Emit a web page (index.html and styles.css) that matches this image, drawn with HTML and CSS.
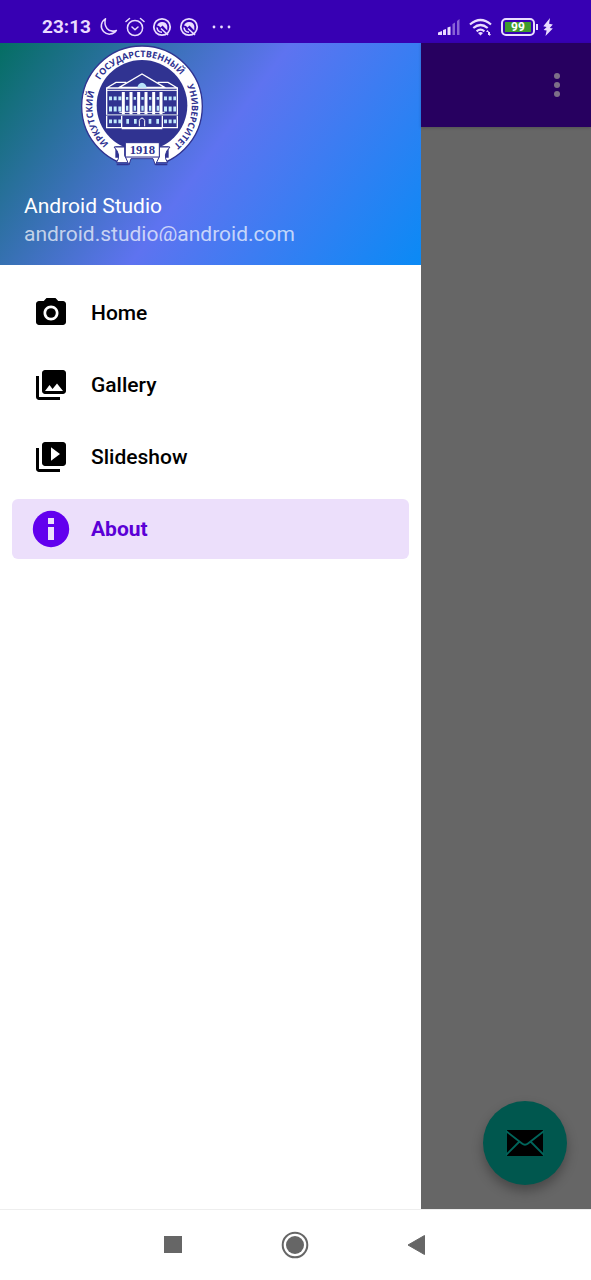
FILE: index.html
```html
<!DOCTYPE html>
<html lang="en">
<head>
<meta charset="utf-8">
<meta name="viewport" content="width=device-width, initial-scale=1">
<title>Android Studio</title>
<link rel="stylesheet" href="styles.css">
</head>
<body>
<div class="screen">
  <header class="status">
    <div class="status-group">
      <span class="clock">23:13</span>
      <svg class="icon-status" viewBox="0 0 20 20" aria-hidden="true"><path d="M7.500 1.800A8.200 8.200 0 1 0 18.400 13.400Q12 15.500 9 11.500 5.800 7 7.500 1.800Z" fill="none" stroke="currentColor" stroke-width="1.500" stroke-linejoin="round"/></svg>
      <svg class="icon-status" viewBox="0 0 20 20" aria-hidden="true"><g fill="none" stroke="currentColor" stroke-width="1.500" stroke-linecap="round" stroke-linejoin="round"><circle cx="10" cy="11" r="7.600"/><path d="M1 4.500 4.500 1.500M19 4.500 15.500 1.500M7 10l3 2.800 3-2.800"/></g></svg>
      <svg class="icon-status" viewBox="0 0 20 20" aria-hidden="true"><circle cx="10" cy="10" r="8.200" fill="none" stroke="currentColor" stroke-width="1.800"/><path d="M5 8.500A5.400 5.400 0 0 1 15.300 9V13.500L10.500 8.500 8.500 10.500 7 9Z" fill="currentColor"/><path d="M5 10.500Q5.500 15 10 15.300M9 11.500 16 18" fill="none" stroke="currentColor" stroke-width="1.600"/></svg>
      <svg class="icon-status" viewBox="0 0 20 20" aria-hidden="true"><circle cx="10" cy="10" r="8.200" fill="none" stroke="currentColor" stroke-width="1.800"/><path d="M5 8.500A5.400 5.400 0 0 1 15.300 9V13.500L10.500 8.500 8.500 10.500 7 9Z" fill="currentColor"/><path d="M5 10.500Q5.500 15 10 15.300M9 11.500 16 18" fill="none" stroke="currentColor" stroke-width="1.600"/></svg>
      <svg class="icon-more" viewBox="0 0 26 20" aria-hidden="true"><g fill="currentColor"><circle cx="8" cy="10" r="1.400"/><circle cx="15.500" cy="10" r="1.400"/><circle cx="23" cy="10" r="1.400"/></g></svg>
    </div>
    <div class="status-group status-right">
      <svg class="icon-signal" viewBox="0 0 24 18" aria-hidden="true"><g fill="currentColor"><path d="M1 14.500 5 13v4H1zM6 12l3-1v6H6zM10.500 9.500l3-1V17h-3z"/><path opacity=".45" d="M15.500 6 18 4.500V17h-2.500zM20 3l2.500-2v16H20z"/></g></svg>
      <svg class="icon-wifi" viewBox="0 0 24 18" aria-hidden="true"><g fill="none" stroke="currentColor" stroke-width="2.200"><path d="M1 6.500Q11.500-2.500 22 6.500M4.300 10Q11.500 4 18.700 10M7.600 13.300Q11.500 10 15.400 13.300"/></g><path d="M9 15Q11.500 13 14 15l-2.500 2.500zM17 14l1.500-2 1.500 2v3h-1v-3zM20 14h1v2h1l-1.300 2-1.300-2z" fill="currentColor"/></svg>
      <span class="battery"><span class="battery-level">99</span></span>
      <svg class="icon-bolt" viewBox="0 0 10 18" aria-hidden="true"><path d="M7 0 .3 8.300l3.300.7-3 3 3 .6L2.500 18l7.300-7.500-3-.6 3-3.500-3.700-.6z" fill="currentColor"/></svg>
    </div>
  </header>

  <div class="app">
    <aside class="drawer">
      <div class="drawer-header">
        <svg class="logo" viewBox="27 14 366 366" role="img" aria-label="Иркутский государственный университет">
          <defs>
            <path id="ring" d="M210 348A149 149 0 0 1 210 50A149 149 0 0 1 210 348"/>
            <clipPath id="ring-gap"><path d="M20 10H400V380H280V352H140V380H20Z"/></clipPath>
          </defs>
          <g clip-path="url(#ring-gap)">
            <circle cx="210" cy="198" r="181" fill="#fff" stroke="#303391" stroke-width="4"/>
            <circle cx="210" cy="195" r="136" fill="#303391"/>
            <path d="M130 318H290V352H130Z" fill="#303391"/>
          </g>
          <g class="logo-ring">
            <text><textPath href="#ring" startOffset="20.800%">ИРКУТСКИЙ</textPath></text>
            <text><textPath href="#ring" startOffset="49%">ГОСУДАРСТВЕННЫЙ</textPath></text>
            <text><textPath href="#ring" startOffset="78.500%">УНИВЕРСИТЕТ</textPath></text>
          </g>
          <g fill="none" stroke="#fff" stroke-width="4">
            <path d="M104 143V223H316V143ZM104 143 132 126H163M316 143 288 126H257M142 141 210 101 278 141Z"/>
            <path stroke-width="3" d="M104 150H316M142 216H278"/>
            <path stroke="#9fa7c9" d="M104 223H316"/>
            <path d="M104 226V262H316V226M149 226V264M271 226V264M149 265H271"/>
            <path stroke-width="3" d="M202 258V240Q210 226 218 240V258"/>
          </g>
          <path d="M196 142Q198 128 210 127 222 128 224 142Z" fill="#b9e3fa"/>
          <path stroke="#fff" stroke-width="9" d="M154 155V222M177 155V222M200 155V222M222 155V222M245 155V222M267 155V222"/>
          <g stroke="#bfe9fb" stroke-width="11">
            <path stroke-dasharray="9 5" d="M111 174H149M276 174H312M111 243H149M276 243H312"/>
            <path stroke-width="15" stroke-dasharray="9 5" d="M111 206H149M276 206H312"/>
            <path stroke-width="15" stroke-dasharray="7 16" d="M162 204H264"/>
            <path stroke-width="14" stroke-dasharray="8 15" d="M163 243H194M230 243H262"/>
            <path stroke-width="8" stroke-dasharray="7 16" d="M162 174H264"/>
          </g>
          <path d="M126 320Q150 344 133 367H171L158 346V320ZM294 320Q270 344 287 367H248L262 346V320Z" fill="#fff" stroke="#303391" stroke-width="3"/>
          <path d="M134 372H170M250 372H286" fill="none" stroke="#303391" stroke-width="5"/>
          <path d="M160 349 171 374 177 355H243L250 374 262 349Z" fill="#fff" stroke="#303391" stroke-width="3"/>
          <path d="M160 307H262V350H160Z" fill="#fff" stroke="#303391" stroke-width="3"/>
          <text class="logo-year" x="211" y="342">1918</text>
        </svg>
        <div class="account-name">Android Studio</div>
        <div class="account-mail">android.studio@android.com</div>
      </div>
      <nav class="menu">
        <a class="menu-item" href="#home">
          <svg class="menu-icon" viewBox="0 0 24 24" aria-hidden="true"><circle cx="12" cy="12" r="3.200"/><path d="M9 2 7.170 4H4c-1.100 0-2 .9-2 2v12c0 1.100.9 2 2 2h16c1.100 0 2-.9 2-2V6c0-1.100-.9-2-2-2h-3.170L15 2H9zm3 15c-2.760 0-5-2.240-5-5s2.240-5 5-5 5 2.240 5 5-2.240 5-5 5z"/></svg>
          Home</a>
        <a class="menu-item" href="#gallery">
          <svg class="menu-icon" viewBox="0 0 24 24" aria-hidden="true"><path d="M22 16V4c0-1.100-.9-2-2-2H8c-1.100 0-2 .9-2 2v12c0 1.100.9 2 2 2h12c1.100 0 2-.9 2-2zm-11-4 2.030 2.710L16 11l4 5H8l3-4zM2 6v14c0 1.100.9 2 2 2h14v-2H4V6H2z"/></svg>
          Gallery</a>
        <a class="menu-item" href="#slideshow">
          <svg class="menu-icon" viewBox="0 0 24 24" aria-hidden="true"><path d="M4 6H2v14c0 1.100.9 2 2 2h14v-2H4V6zm16-4H8c-1.100 0-2 .9-2 2v12c0 1.100.9 2 2 2h12c1.100 0 2-.9 2-2V4c0-1.100-.9-2-2-2zm-8 12.500v-9l6 4.500-6 4.500z"/></svg>
          Slideshow</a>
        <a class="menu-item menu-item-active" href="#about" aria-current="page">
          <svg class="menu-icon" viewBox="0 0 36 36" aria-hidden="true"><circle cx="18" cy="18" r="18.200"/><path d="M15 7h6v6h-6zM15 16h6v13h-6z" fill="#ecdffb"/></svg>
          About</a>
      </nav>
    </aside>
    <main class="content">
      <div class="toolbar">
        <button class="more" type="button" aria-label="More options"><svg viewBox="0 0 8 26" aria-hidden="true"><circle cx="4" cy="4" r="3"/><circle cx="4" cy="13" r="3"/><circle cx="4" cy="22" r="3"/></svg></button>
      </div>
      <button class="fab" type="button" aria-label="Send mail">
        <svg viewBox="0 0 38 26" aria-hidden="true"><path d="M1 0H37V26H1Z"/><path d="M0 1 16 13.500Q19 16 22 13.500L38 1M0 25 13 12M38 25 25 12" fill="none" stroke="#00655b" stroke-width="1.800"/></svg>
      </button>
    </main>
  </div>

  <footer class="navbar">
    <button type="button" aria-label="Recent apps"><svg viewBox="0 0 28 28" aria-hidden="true"><path d="M5 5H23V22H5Z"/></svg></button>
    <button type="button" aria-label="Home screen"><svg viewBox="0 0 28 28" aria-hidden="true"><circle cx="14" cy="14" r="12.300" fill="none" stroke="#666" stroke-width="2"/><circle cx="14" cy="14" r="9"/></svg></button>
    <button type="button" aria-label="Back"><svg viewBox="0 0 28 28" aria-hidden="true"><path d="M5 14 21.500 4.500V23.500Z" stroke="#666" stroke-linejoin="round"/></svg></button>
  </footer>
</div>
</body>
</html>
```
FILE: styles.css
```css
* { box-sizing: border-box; }
body {
  margin: 0;
  font-family: Roboto, "Noto Sans", sans-serif;
  font-size: 21px;
}
button { border: 0; padding: 0; background: none; }
svg { display: block; flex: none; }

.screen { display: flex; flex-direction: column; min-height: 100vh; }

.status {
  display: flex;
  justify-content: space-between;
  align-items: center;
  height: 43px;
  padding: 10px 38px 0 42px;
  background: #3700b3;
  color: #eadcff;
}
.status-group { display: flex; align-items: center; gap: 7px; }
.status-right { gap: 8px; }
.clock { font-size: 19px; font-weight: 700; line-height: 24px; }
.icon-status { width: 20px; height: 20px; }
.icon-more { width: 26px; height: 20px; }
.icon-signal, .icon-wifi { width: 24px; height: 18px; }
.icon-bolt { width: 10px; height: 18px; }
.battery {
  position: relative;
  width: 34px;
  height: 18px;
  padding: 2px;
  border: 2px solid #eadcff;
  border-radius: 5px;
}
.battery::after {
  content: "";
  position: absolute;
  top: 4px;
  right: -5px;
  width: 2px;
  height: 6px;
  background: #eadcff;
}
.battery-level {
  display: block;
  background: #3f9b2c;
  color: #fff;
  font-size: 12px;
  font-weight: 700;
  line-height: 10px;
  text-align: center;
}

.app { flex: 1; display: flex; }
.drawer { flex: 1; background: #fff; }
.drawer-header {
  padding: 2px 24px 24px;
  background: linear-gradient(126deg, #046e63 0%, #5e73f0 50%, #0a8af5 100%);
  color: #fff;
}
.logo { width: 122px; height: 122px; margin-left: 57px; }
.account-name, .account-mail { font-size: 21px; line-height: 28px; }
.account-name { margin-top: 25px; }
.account-mail {
  height: 21px;
  overflow: hidden;
  color: rgba(255, 255, 255, 0.7);
}
.logo-ring {
  fill: #303391;
  font-family: "Open Sans", "Noto Sans", sans-serif;
  font-size: 27px;
  font-weight: 700;
  text-anchor: middle;
}
.logo-year {
  fill: #303391;
  font-family: "Liberation Serif", serif;
  font-size: 38px;
  font-weight: 700;
  text-anchor: middle;
}

.menu { display: flex; flex-direction: column; gap: 12px; padding: 18px 12px; }
.menu-item {
  display: flex;
  align-items: center;
  gap: 22px;
  height: 60px;
  padding: 0 21px;
  border-radius: 6px;
  color: #000;
  font-size: 21px;
  font-weight: 500;
  text-decoration: none;
}
.menu-item-active { background: #ecdffb; color: #5b00d6; font-weight: 700; }
.menu-icon { width: 36px; height: 36px; fill: currentColor; overflow: visible; }
.menu-item-active .menu-icon { fill: #6200ee; }

.content {
  display: flex;
  flex-direction: column;
  justify-content: space-between;
  align-items: flex-end;
  width: 170px;
  padding-bottom: 24px;
  background: #666;
}
.toolbar {
  display: flex;
  justify-content: flex-end;
  align-items: center;
  width: 100%;
  height: 84px;
  padding-right: 30px;
  background: #270060;
  box-shadow: 0 1px 3px rgba(0, 0, 0, 0.2);
}
.more svg { width: 8px; height: 26px; fill: #7d6f88; }
.fab {
  display: flex;
  align-items: center;
  justify-content: center;
  width: 84px;
  height: 84px;
  margin-right: 24px;
  border-radius: 50%;
  background: #00574e;
  box-shadow: 0 6px 12px rgba(0, 0, 0, 0.3);
}
.fab svg { width: 38px; height: 26px; }

.navbar {
  display: flex;
  justify-content: center;
  align-items: center;
  gap: 94px;
  height: 71px;
  padding-right: 2px;
  border-top: 1px solid #eee;
  background: #fff;
}
.navbar svg { width: 28px; height: 28px; fill: #666; }
```
